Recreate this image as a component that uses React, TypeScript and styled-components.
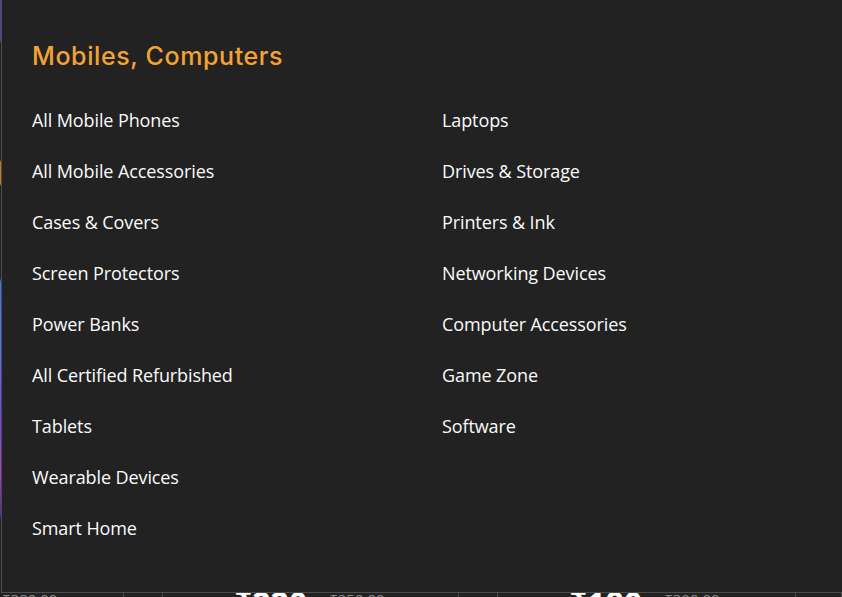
import React from "react";
import styled, { createGlobalStyle } from "styled-components";

const GlobalStyle = createGlobalStyle`
  html, body {
    margin: 0;
    padding: 0;
    background: #1c1c1c;
  }
`;

const Page = styled.div`
  position: relative;
  width: 842px;
  height: 597px;
  overflow: hidden;
  background: #222;
  font-family: "Open Sans", "Noto Sans", sans-serif;
`;

// strip of the page that peeks out behind the menu
const SideStrip = styled.div`
  position: absolute;
  left: 0;
  top: 0;
  width: 1px;
  height: 100%;
  background: linear-gradient(
    to bottom,
    #4a46a8 0px,
    #4a46a8 40px,
    #222 44px,
    #222 160px,
    #c77a1c 162px,
    #c77a1c 184px,
    #222 186px,
    #222 278px,
    #3b6ff0 282px,
    #4a7cff 340px,
    #7a3cff 420px,
    #b03cd8 470px,
    #5a2a90 515px,
    #222 520px
  );
`;

const PriceRow = styled.div`
  position: absolute;
  left: 0;
  right: 0;
  top: 593px;
  height: 20px;
  display: flex;
  align-items: flex-start;
`;

const PriceCell = styled.div<{ $w: number; $pad?: number }>`
  width: ${(p) => p.$w}px;
  height: 20px;
  border-right: 1px solid #4a4a4a;
  box-sizing: border-box;
  display: flex;
  align-items: flex-start;
  gap: 22px;
  padding-left: ${(p) => p.$pad ?? 2}px;
`;

const OldPrice = styled.span`
  color: #8a8a8a;
  font-size: 15px;
  line-height: 20px;
  margin-top: -4px;
  white-space: nowrap;
`;

const NewPrice = styled.span`
  color: #fff;
  font-weight: 700;
  font-size: 32px;
  line-height: 30px;
  margin-top: -5px;
  white-space: nowrap;
`;

const Menu = styled.div`
  position: absolute;
  left: 1px;
  top: 0;
  right: 0;
  height: 593px;
  box-sizing: border-box;
  background: #222;
  border-left: 1px solid #4c4c4c;
  border-bottom: 1px solid #4c4c4c;
  padding: 40px 0 0 30px;
`;

const Heading = styled.h2`
  margin: 0;
  font-family: Inter, "Noto Sans", sans-serif;
  font-weight: 500;
  font-size: 25px;
  line-height: 33px;
  letter-spacing: 0.6px;
  color: #f5a234;
`;

const Columns = styled.div`
  margin-top: 21px;
  display: grid;
  grid-template-columns: 410px 1fr;
`;

const List = styled.ul`
  list-style: none;
  margin: 0;
  padding: 0;
`;

const Item = styled.li`
  height: 51px;
  display: flex;
  align-items: center;
  font-size: 18px;
  letter-spacing: -0.1px;
  color: #fafafa;
  cursor: pointer;
  &:hover {
    color: #f5a234;
  }
`;

const left = [
  "All Mobile Phones",
  "All Mobile Accessories",
  "Cases & Covers",
  "Screen Protectors",
  "Power Banks",
  "All Certified Refurbished",
  "Tablets",
  "Wearable Devices",
  "Smart Home",
];

const right = [
  "Laptops",
  "Drives & Storage",
  "Printers & Ink",
  "Networking Devices",
  "Computer Accessories",
  "Game Zone",
  "Software",
];

const App: React.FC = () => {
  return (
    <>
      <GlobalStyle />
      <Page>
        <SideStrip />
        <PriceRow>
          <PriceCell $w={124}>
            <OldPrice>₹380.00</OldPrice>
          </PriceCell>
          <PriceCell $w={39} />
          <PriceCell $w={296} $pad={71}>
            <NewPrice>₹220</NewPrice>
            <OldPrice>₹250.00</OldPrice>
          </PriceCell>
          <PriceCell $w={39} />
          <PriceCell $w={298} $pad={71}>
            <NewPrice>₹180</NewPrice>
            <OldPrice>₹300.00</OldPrice>
          </PriceCell>
          <PriceCell $w={46} />
        </PriceRow>
        <Menu>
          <Heading>Mobiles, Computers</Heading>
          <Columns>
            <List>
              {left.map((name) => (
                <Item key={name}>{name}</Item>
              ))}
            </List>
            <List>
              {right.map((name) => (
                <Item key={name}>{name}</Item>
              ))}
            </List>
          </Columns>
        </Menu>
      </Page>
    </>
  );
};

export default App;
